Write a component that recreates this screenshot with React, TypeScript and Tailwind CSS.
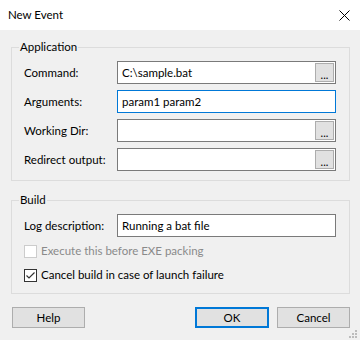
import { ReactNode } from "react";

const FONT = "font-['Lato','Noto_Sans',sans-serif]";

const Browse = () => (
	<div className="w-[19px] h-[19px] bg-[#e1e1e1] border border-[#adadad] flex items-end justify-center text-[11px] leading-[13px] text-black">
		...
	</div>
);

interface FieldProps {
	label: string;
	value?: string;
	browse?: boolean;
	focused?: boolean;
}

const Field = ({ label, value, browse, focused }: FieldProps) => (
	<>
		<label className="h-[23px] flex items-center text-black">{label}</label>
		<div
			className={`h-[23px] bg-white border flex items-center p-[1px] ${
				focused ? "border-[#0078d7]" : "border-[#7a7a7a]"
			}`}
		>
			<span className="flex-1 pl-[3px] text-black whitespace-nowrap">{value}</span>
			{browse && <Browse />}
		</div>
	</>
);

const Group = ({ title, children, className }: { title: string; children: ReactNode; className?: string }) => (
	<fieldset className={`border border-[#dcdcdc] pl-[12px] pr-[13px] ${className ?? ""}`}>
		<legend className="-ml-[5px] px-[1px] leading-[16px] text-black">{title}</legend>
		{children}
	</fieldset>
);

const CheckBox = ({ checked, disabled, label }: { checked?: boolean; disabled?: boolean; label: string }) => (
	<div className="flex items-center gap-[4px] h-[16px]">
		<div
			className={`w-[13px] h-[13px] bg-white border flex items-center justify-center ${
				disabled ? "border-[#cccccc]" : "border-[#333333]"
			}`}
		>
			{checked && (
				<svg width="11" height="11" viewBox="0 0 11 11">
					<path d="M1.5 5.5 L4 8 L9.5 2.5" fill="none" stroke="#333" strokeWidth="1.2" />
				</svg>
			)}
		</div>
		<span className={disabled ? "text-[#8a8a8a]" : "text-black"}>{label}</span>
	</div>
);

const Button = ({ label, primary }: { label: string; primary?: boolean }) => (
	<button
		className={`h-[21px] bg-[#e1e1e1] flex items-center justify-center text-black ${
			primary ? "w-[74px] border-2 border-[#0078d7]" : "w-[73px] border border-[#adadad]"
		}`}
	>
		{label}
	</button>
);

export default function App() {
	return (
		<div className={`w-[360px] h-[340px] bg-[#f0f0f0] flex flex-col relative text-[11.5px] ${FONT}`}>
			<div className="h-[30px] bg-white flex items-center justify-between pl-[8px] pr-[10px] shrink-0">
				<span className="text-black">New Event</span>
				<svg width="11" height="11" viewBox="0 0 11 11">
					<path d="M0.5 0.5 L10.5 10.5 M10.5 0.5 L0.5 10.5" stroke="#000" strokeWidth="1" />
				</svg>
			</div>

			<div className="flex-1 pl-[11px] pr-[10px] pt-[9px] flex flex-col">
				<Group title="Application" className="pt-[6px] pb-[9px]">
					<div className="grid grid-cols-[93px_219px] gap-y-[6px]">
						<Field label="Command:" value="C:\sample.bat" browse />
						<Field label="Arguments:" value="param1 param2" focused />
						<Field label="Working Dir:" browse />
						<Field label="Redirect output:" browse />
					</div>
				</Group>

				<Group title="Build" className="mt-[11px] pt-[6px] pb-[10px]">
					<div className="grid grid-cols-[93px_219px]">
						<Field label="Log description:" value="Running a bat file" />
					</div>
					<div className="flex flex-col gap-[8px] mt-[6px]">
						<CheckBox disabled label="Execute this before EXE packing" />
						<CheckBox checked label="Cancel build in case of launch failure" />
					</div>
				</Group>

				<div className="flex items-center mt-[13px] pl-[1px]">
					<Button label="Help" />
					<div className="flex-1" />
					<div className="flex gap-[8px]">
						<Button label="OK" primary />
						<Button label="Cancel" />
					</div>
				</div>
			</div>

			<svg className="absolute right-[3px] bottom-[2px]" width="8" height="8" viewBox="0 0 8 8">
				<rect x="6" y="0" width="2" height="2" fill="#bcbcbc" />
				<rect x="3" y="3" width="2" height="2" fill="#bcbcbc" />
				<rect x="6" y="3" width="2" height="2" fill="#bcbcbc" />
				<rect x="0" y="6" width="2" height="2" fill="#bcbcbc" />
				<rect x="3" y="6" width="2" height="2" fill="#bcbcbc" />
				<rect x="6" y="6" width="2" height="2" fill="#bcbcbc" />
			</svg>
		</div>
	);
}
